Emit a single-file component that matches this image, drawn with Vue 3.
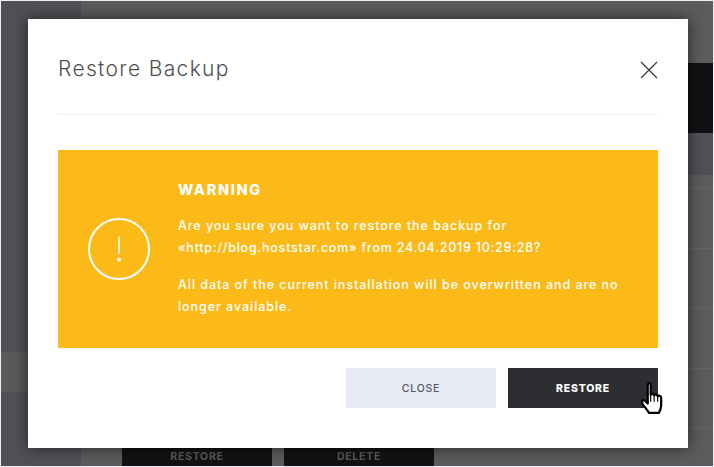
<script setup>
const rowCount = 4
</script>

<template>
  <div class="screen">
    <div class="page">
      <aside class="rail">
        <div class="rail-seg"></div>
      </aside>
      <main class="content">
        <div class="dark-row"></div>
        <div class="blue-row"></div>
        <div class="row-start"></div>
        <div v-for="n in rowCount" :key="n" class="row"></div>
        <div class="content-actions">
          <div class="bg-btn">RESTORE</div>
          <div class="bg-btn">DELETE</div>
        </div>
      </main>
    </div>

    <section class="modal">
      <header class="modal-head">
        <h2 class="title">Restore Backup</h2>
        <svg class="close-x" width="18" height="18" viewBox="0 0 18 18">
          <path d="M1 1 L17 17 M17 1 L1 17" stroke="#333" stroke-width="1.1" fill="none" />
        </svg>
      </header>

      <div class="warning">
        <svg class="warn-icon" width="62" height="62" viewBox="0 0 62 62">
          <circle cx="31" cy="31" r="30" fill="none" stroke="#fff" stroke-width="2" />
          <path d="M31 18.5 V36" stroke="#fff" stroke-width="1.6" fill="none" />
          <circle cx="31" cy="41.5" r="2" fill="#fff" />
        </svg>
        <div class="warn-text">
          <h3 class="warn-title">WARNING</h3>
          <p>Are you sure you want to restore the backup for<br><span class="tight">«http://blog.hoststar.com» from 24.04.2019 10:29:28?</span></p>
          <p>All data of the current installation will be overwritten and are no longer available.</p>
        </div>
      </div>

      <footer class="actions">
        <button class="btn light">CLOSE</button>
        <button class="btn dark">RESTORE</button>
      </footer>

      <svg class="cursor" width="26" height="35" viewBox="0 0 22 30">
        <path d="M6.5 2.5 C6.5 0.8 9 0.8 9 2.5 V11 C9.5 9.8 12 9.8 12 11.5 C12.5 10.3 15 10.5 15 12.3 C15.6 11.3 18 11.5 18 13.5 V20 C18 23 17 24.5 16 26.5 H7.5 C6.5 24 4.5 22.5 2.5 19.5 C1 17.5 1.2 15.2 3 15.6 C4.5 16 5.5 17.5 6.5 18.5 Z" fill="#fff" stroke="#000" stroke-width="1.9" stroke-linejoin="round" />
        <path d="M9 11 V17 M12 11.5 V17 M15 12.3 V17" stroke="#000" stroke-width="1" fill="none" />
      </svg>
    </section>
  </div>
</template>

<style>
html, body { margin: 0; padding: 0; background: #eceef3; }
</style>

<style scoped>
.screen {
  position: relative;
  width: 714px;
  height: 467px;
  overflow: hidden;
  padding: 1px;
  box-sizing: border-box;
  font-family: "Inter", "Liberation Sans", sans-serif;
}
.page {
  display: flex;
  width: 712px;
  height: 465px;
  background: #5c5c5c;
}
.rail {
  width: 80px;
  flex: none;
  background: #505156;
  padding-top: 351px;
  box-sizing: border-box;
}
.rail-seg {
  height: 40px;
  background: #5a5a5a;
}
.content {
  flex: 1;
  display: flex;
  flex-direction: column;
  padding-top: 62px;
  box-sizing: border-box;
}
.dark-row {
  height: 70px;
  background: #111214;
}
.blue-row {
  height: 42px;
  background: #505156;
}
.row-start {
  height: 13px;
  border-bottom: 1px solid #646464;
}
.row {
  height: 59px;
  border-bottom: 1px solid #646464;
}
.content-actions {
  display: flex;
  gap: 12px;
  margin-left: 41px;
  margin-top: 19px;
}
.bg-btn {
  width: 150px;
  height: 18px;
  background: #111214;
  color: #5a5a5a;
  font-size: 10.5px;
  font-weight: 700;
  letter-spacing: 0.75px;
  text-align: center;
  line-height: 18px;
}
.modal {
  position: absolute;
  left: 28px;
  top: 19px;
  width: 660px;
  height: 429px;
  background: #fff;
  box-sizing: border-box;
  padding: 0 30px;
  box-shadow: 0 0 14px rgba(0, 0, 0, 0.6);
}
.modal-head {
  height: 91px;
  padding-top: 4px;
  border-bottom: 1px solid #eceef3;
  display: flex;
  align-items: center;
  justify-content: space-between;
}
.title {
  margin: 0;
  font-size: 21px;
  font-weight: 300;
  letter-spacing: 1.35px;
  color: #505050;
}
.close-x {
  margin-top: 3px;
}
.warning {
  margin-top: 35px;
  height: 198px;
  background: #fbba18;
  display: flex;
  align-items: center;
  color: #fff;
  box-sizing: border-box;
}
.warn-icon {
  margin-left: 30px;
  flex: none;
}
.warn-text {
  margin-left: 28px;
  margin-top: 1px;
  width: 450px;
}
.warn-title {
  margin: 0 0 16px;
  font-size: 14.5px;
  font-weight: 800;
  letter-spacing: 1.65px;
  line-height: 18px;
}
.warn-text p {
  margin: 0 0 15px;
  font-size: 12.5px;
  font-weight: 500;
  letter-spacing: 0.95px;
  line-height: 22px;
}
.warn-text .tight {
  letter-spacing: 0.77px;
}
.warn-text p:last-child { margin-bottom: 0; }
.actions {
  display: flex;
  justify-content: flex-end;
  gap: 12px;
  margin-top: 20px;
}
.btn {
  width: 150px;
  height: 40px;
  border: 0;
  padding: 0;
  font-family: inherit;
  font-size: 10.5px;
  letter-spacing: 0.75px;
}
.light {
  background: #e8eaf3;
  color: #55575d;
  font-weight: 500;
}
.dark {
  background: #2d2e32;
  color: #fff;
  font-weight: 800;
}
.cursor {
  position: absolute;
  left: 612px;
  top: 363px;
}
</style>
